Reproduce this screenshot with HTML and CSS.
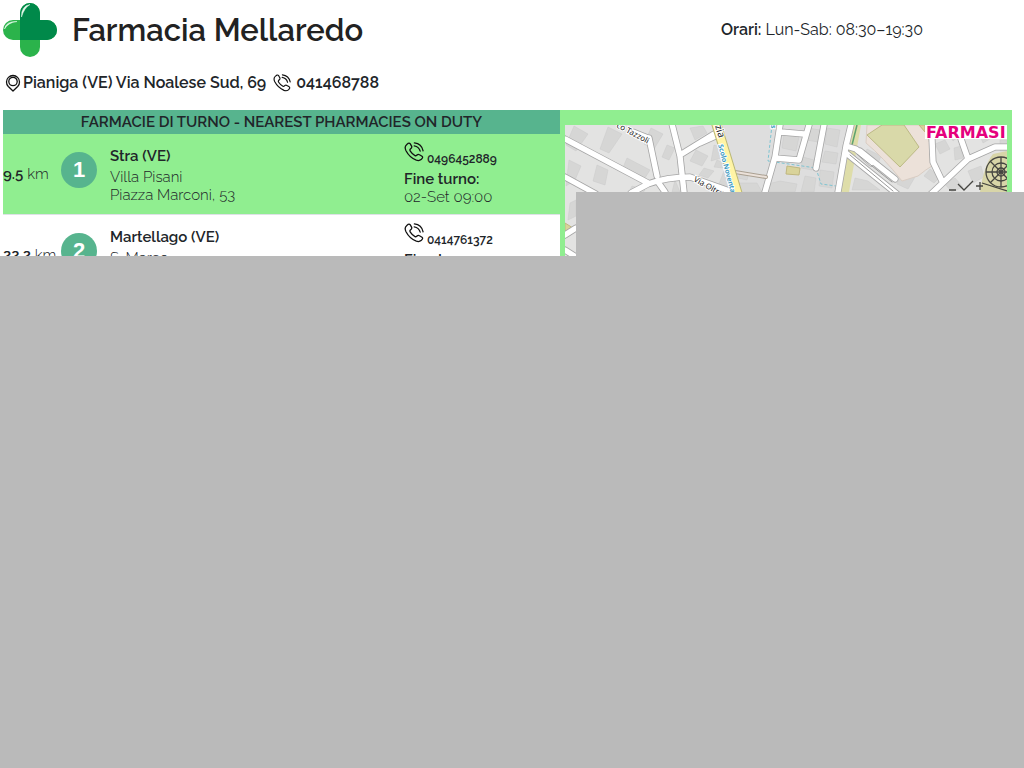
FILE: index.html
```html
<!DOCTYPE html>
<html lang="it">
<head>
<meta charset="utf-8">
<title>Farmacia Mellaredo</title>
<meta name="viewport" content="width=device-width, initial-scale=1">
<link rel="stylesheet" href="styles.css">
</head>
<body>
<svg class="defs" aria-hidden="true">
  <symbol id="phone" viewBox="0 0 20 20">
    <path d="M2.8 2.4 4.2 1.3Q5.5.8 6.3 1.9L7.7 4.4Q8 5.6 7 6.4L6.2 7.2Q5.6 8.1 6.3 9.2Q8.1 12.1 11 13.6Q12 14 12.8 13.1L13.7 12.6Q14.6 12.2 15.5 12.8L18 14.3Q19 15.2 18.3 16.2L17.1 17.6Q15.2 19.2 12.3 18.2Q5.5 15.4 2 8.7Q0 4.6 2.8 2.4ZM10.4.9Q17.6 1.7 19.1 8.8M10.2 3.8Q15 4.6 16.2 9.2"/>
  </symbol>
</svg>
<header class="header">
  <div class="brand">
    <svg class="logo" viewBox="0 0 54 54" aria-hidden="true">
      <rect x="17" y="0" width="20" height="54" rx="10" fill="#2bb34b"/>
      <rect x="0" y="17" width="54" height="20" rx="10" fill="#2bb34b"/>
      <path d="M17 37V10a10 10 0 0 1 20 0v7h7a10 10 0 0 1 0 20Z" fill="#00894a"/>
      <path d="M18.5 14Q18 3 27 1.5Q21 5 18.5 14ZM1.5 26Q3 18 14 18.5Q5 19.5 1.5 26Z" fill="#e9faed" stroke="#e9faed" stroke-width=".5"/>
    </svg>
    <h1 class="title">Farmacia Mellaredo</h1>
  </div>
  <p class="hours"><b>Orari:</b> Lun-Sab: 08:30–19:30</p>
</header>
<p class="address">
  <svg class="icon pin" viewBox="0 0 16 18" aria-hidden="true"><path d="M8 17 3.3 12.5A6.5 6.5 0 1 1 12.7 12.5ZM8 3.3a4.2 4.2 0 1 0 0 8.4a4.2 4.2 0 1 0 0-8.4"/></svg>
  <span>Pianiga (VE) Via Noalese Sud, 69</span>
  <svg class="icon call" aria-hidden="true"><use href="#phone"/></svg>
  <span>041468788</span>
</p>
<main class="content">
  <table class="duty">
    <colgroup><col class="col-km"><col class="col-num"><col><col class="col-phone"></colgroup>
    <thead>
      <tr><th colspan="4">FARMACIE DI TURNO - NEAREST PHARMACIES ON DUTY</th></tr>
    </thead>
    <tbody>
      <tr class="nearest">
        <td class="km"><b>9.5</b> km</td>
        <td class="num"><span class="badge">1</span></td>
        <td class="place"><b>Stra (VE)</b><br>Villa Pisani<br>Piazza Marconi, 53</td>
        <td class="contact"><div class="phone"><svg class="icon" aria-hidden="true"><use href="#phone"/></svg><b>0496452889</b></div><b>Fine turno:</b><br>02-Set 09:00</td>
      </tr>
      <tr>
        <td class="km"><b>22.2</b> km</td>
        <td class="num"><span class="badge">2</span></td>
        <td class="place"><b>Martellago (VE)</b><br>S. Marco</td>
        <td class="contact"><div class="phone"><svg class="icon" aria-hidden="true"><use href="#phone"/></svg><b>0414761372</b></div><b>Fine turno:</b></td>
      </tr>
    </tbody>
  </table>
  <div class="map-frame">
    <svg class="map" viewBox="565 125 442 160" preserveAspectRatio="xMinYMin slice" role="img" aria-label="Mappa">
      <rect x="565" y="125" width="442" height="160" fill="#e3e3e2"/>
      <path d="M718 125H850L836 195H735Z" fill="#dedede"/>
      <g fill="#d6d6d5" stroke="#cbcbca" stroke-width=".5">
        <path d="M574 126 588 134 576 151 566 145ZM608 127 622 134 609 153 600 149ZM627 158 650 170 643 181 622 170ZM651 128 663 134 654 149 644 144ZM667 145 675 148 669 160 662 157ZM690 128 703 126 707 133 695 140ZM714 145 721 147 721 158 711 161ZM569 160 581 166 575 180 566 186ZM597 165 608 170 605 185 593 181ZM570 203 576 200V216L568 220ZM568 260 576 254V263H569ZM632 186 645 190 640 196H627ZM675 180 680 192H672ZM724 171 734 178 730 189 719 184ZM696 150 708 156 702 166 690 161Z"/>
        <path d="M704 168 714 171 708 178 699 175ZM717 160 724 163 723 168 714 167ZM736 183H757L762 192H737ZM740 173 748 176 747 180 738 178ZM784 134 799 137 796 151 782 148ZM808 128 820 130 818 142 806 140ZM825 151 838 153 836 164 822 162ZM803 157 814 160 812 170 801 168ZM768 184 780 181 797 184 795 192H767ZM805 176 816 178 814 192H801ZM820 170 834 172 832 188 819 186ZM827 128 840 130 837 147 825 144Z"/>
        <path d="M867 149 881 156 877 166 863 158ZM902 171 915 177 908 189 897 184ZM935 144 945 140 950 149 940 154ZM947 129 957 126 960 135 953 141ZM954 148 961 146 963 158 955 160ZM979 133 990 130 995 136 983 143ZM930 169 940 177 934 183 924 176ZM968 171 981 166 984 177 973 183ZM1000 140H1007V151H1000ZM855 178 868 181 880 190H852ZM944 183 955 178 963 187 952 192Z"/>
      </g>
      <path d="M867 125H925L935 164Q925 170 918 176L902 181Q883 157 866 143Z" fill="#ece1d9" stroke="#dacdc3"/>
      <path d="M867 135 882 125H904L919 147 900 167Z" fill="#d9d9a9" stroke="#bcb985"/>
      <path d="M919 125H925V132ZM787 166 800 168 799 175 786 174ZM565 223 573 228 565 233Z" fill="#d9d39a" stroke="#c0b77f"/>
      <path d="M852 125H861L849 192H840Z" fill="#dedda9"/>
      <path d="M857 125 851 149M565 238 576 230" fill="none" stroke="#5fa46f" stroke-width="1.5"/>
      <path d="M772 125 768 161 816 168 821 184 836 186" fill="none" stroke="#7ec4d2" stroke-dasharray="3 2"/>
      <g fill="none" stroke-linecap="round" stroke-linejoin="round">
        <g stroke="#a6a6a6" stroke-width="7">
          <path id="roads" d="M565 139 648 183M648 184Q667 177 690 177L738 194M672 124 680 156 684 192M680 155 714 134M649 138 657 176M633 132 648 138M648 184 631 193M658 182 665 192M565 177 596 194M565 235 576 228M565 250 576 257M720 134 700 143M780 125 775 157 765 192M781 132 804 134M809 125 799 160 775 158M824 125 816 168M851 125 846 146 838 192M846 146 856 149 871 163M932 139 933 162 942 181M961 139 968 159M930 195 968 159 995 147 1007 147"/>
          <path d="M846 153 897 194M860 151 895 179"/>
        </g>
        <g stroke="#fff" stroke-width="5.4">
          <use href="#roads"/>
          <path d="M846 153 897 194M860 151 895 179"/>
        </g>
        <path d="M850 155 893 191M857 154 892 182" stroke="#999" stroke-width="1"/>
        <path d="M735 172 766 177" stroke="#aaa092" stroke-width="4"/>
        <path d="M735 172 766 177" stroke="#ebe1d9" stroke-width="2"/>
        <path d="M716 123Q726 155 738 195" stroke="#bbb875" stroke-width="10"/>
        <path d="M716 123Q726 155 738 195" stroke="#fff4a5" stroke-width="8"/>
      </g>
      <path d="M993 154 1007 151V192H980Q984 165 993 154Z" fill="#d8d5a8"/>
      <g fill="none" stroke="#454541" stroke-width="1.3">
        <circle cx="1001" cy="172" r="15"/><circle cx="1001" cy="172" r="9"/><circle cx="1001" cy="172" r="4"/>
        <path d="M1001 157V187M986 172H1007M990 161 1007 178M990 183 1007 166M982 183 1007 191M958 184 964 190 973 181M973 181 969 185M976 186H983M980 182V190M949 190H956"/>
      </g>
      <g class="map-label">
        <text transform="translate(616 127) rotate(28)">co Tazzoli</text>
        <text transform="translate(693 181) rotate(29)">Via Oltre</text>
        <text class="major" transform="translate(715 126) rotate(73)">zia</text>
        <text class="water" transform="translate(718 145) rotate(75)">Scolo Noventa</text>
        <text class="water" transform="translate(771 125) rotate(90)">s</text>
      </g>
      <path d="M925 125H1007V139H925Z" fill="#fff"/>
      <text class="map-brand" x="926" y="138">FARMASI</text>
    </svg>
  </div>
</main>
<div class="cover cover-page"></div>
<div class="cover cover-map"></div>
</body>
</html>
```
FILE: styles.css
```css
* { box-sizing: border-box; }
html, body { height: 100%; }
body {
  position: relative;
  margin: 0;
  overflow: hidden;
  background: #fff;
  color: #212529;
  font-family: Raleway, Lato, "Open Sans", sans-serif;
  font-size: 16px;
  line-height: 18px;
}
.defs { position: absolute; width: 0; height: 0; }
.icon {
  flex: none;
  width: 20px;
  height: 20px;
  fill: none;
  stroke: #111;
  stroke-width: 1.3;
  stroke-linejoin: round;
  stroke-linecap: round;
}
.header {
  display: grid;
  grid-template-columns: 718fr 303fr;
  align-items: center;
  padding: 3px 0 0 3px;
}
.brand { display: flex; align-items: center; gap: 15px; }
.logo { width: 54px; height: 54px; }
.title { margin: 0; font-size: 31px; line-height: 40px; font-weight: 600; color: #222; }
.hours { margin: 0; font-size: 16px; }
.hours b { font-weight: 600; }
.address {
  display: flex;
  align-items: center;
  margin: 0;
  padding: 13px 5px 15px;
  font-size: 16px;
  line-height: 25px;
  font-weight: 600;
}
.pin { width: 16px; height: 18px; margin-right: 2px; }
.call { width: 18px; height: 18px; margin: 0 5px 0 7px; }
.content {
  display: grid;
  grid-template-columns: 557fr 452fr;
  align-items: start;
  padding: 0 12px 0 3px;
}
.duty { width: 100%; border-collapse: collapse; table-layout: fixed; }
.col-km { width: 57px; }
.col-num { width: 50px; }
.col-phone { width: 156px; }
.duty th {
  height: 24px;
  padding: 0;
  background: #57b48e;
  font-size: 15px;
  font-weight: 600;
}
.duty td { height: 81px; padding: 0; box-shadow: inset 0 -1px #dee2e6; white-space: nowrap; }
.duty tbody { font-weight: 300; }
.duty b { font-weight: 600; }
.nearest { background: #90ee90; }
.duty .km { padding-bottom: 2px; font-size: 15px; }
.place, .contact { font-size: 15px; vertical-align: top; }
.duty .place { padding-top: 10px; }
.place b { line-height: 24px; }
.duty .contact { padding-top: 8px; }
.phone { display: flex; align-items: flex-end; gap: 3px; height: 28px; }
.phone .icon { align-self: flex-start; }
.phone b { font-size: 12px; line-height: 22px; }
.badge {
  display: block;
  width: 36px;
  height: 36px;
  margin-bottom: 10px;
  margin-left: 1px;
  border-radius: 50%;
  background: #57b48e;
  color: #fff;
  font: bold 22px/36px "Liberation Sans", sans-serif;
  text-align: center;
}
.map-frame { padding: 15px 5px 0; background: #90ee90; }
.map { display: block; width: 100%; }
.map-label {
  fill: #222;
  stroke: #fff;
  stroke-width: 2px;
  paint-order: stroke;
  font: 8px "Noto Sans", sans-serif;
}
.map-label .major { font-size: 10px; }
.map-label .water { fill: #429dc4; font-weight: bold; font-size: 7px; }
.map-brand { fill: #e5007d; font: bold 16px "DejaVu Sans", sans-serif; }
.cover { position: absolute; right: 0; bottom: 0; background: #bababa; }
.cover-page { top: 256px; left: 0; }
.cover-map { top: 192px; left: 576px; }
```
